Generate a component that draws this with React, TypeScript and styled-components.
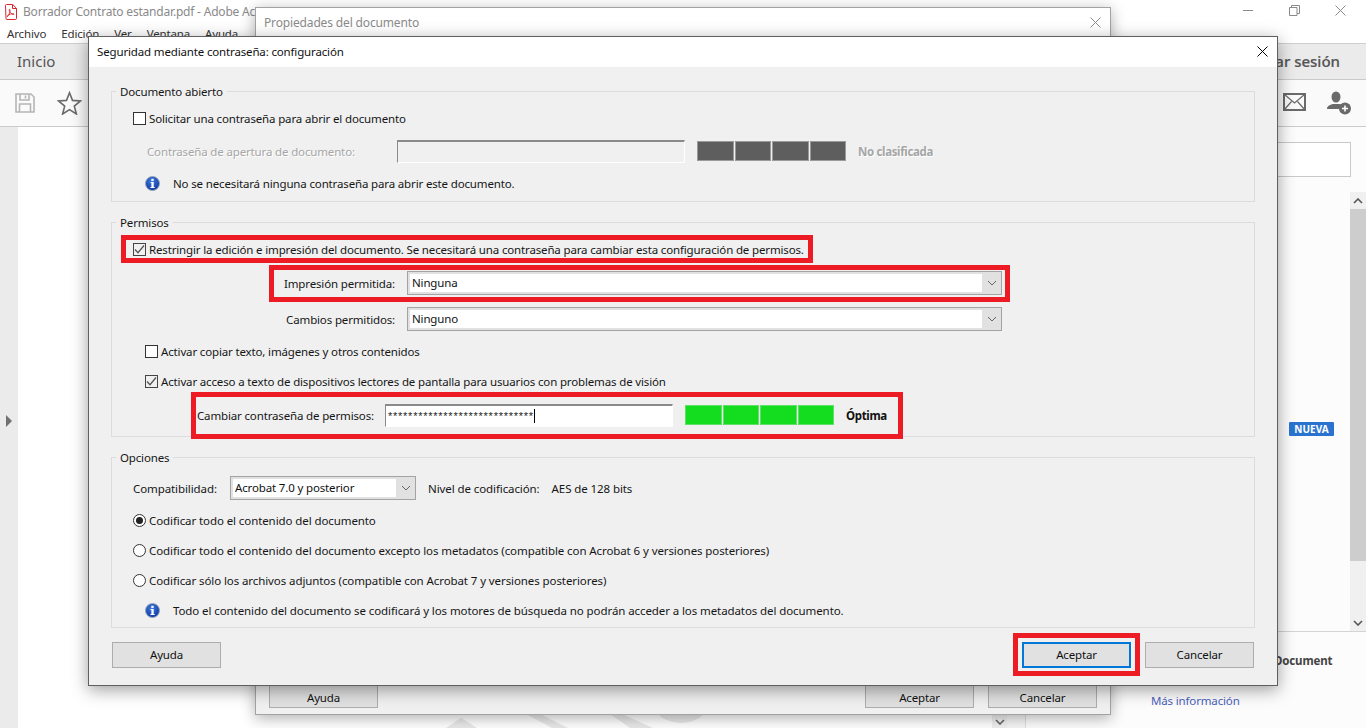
import React from "react";
import styled, { createGlobalStyle } from "styled-components";

const Global = createGlobalStyle`
  html, body { margin: 0; padding: 0; background: #fff; }
  * { box-sizing: border-box; }
  body { font-family: "Noto Sans", "Open Sans", sans-serif; font-size: 11.5px; letter-spacing: -0.15px; color: #161616; }
`;

const Page = styled.div`
  position: relative; width: 1366px; height: 728px; overflow: hidden;
  display: flex; flex-direction: column; background: #fff;
`;

/* ---------- background application ---------- */
const AppTitle = styled.div`
  height: 23px; display: flex; align-items: center; padding: 0 20px 0 4px; gap: 5px; color: #8a8a8a; font-size: 12px;
`;
const AppTitleText = styled.span`
  flex: 0 0 232px; overflow: hidden; white-space: nowrap; letter-spacing: -0.2px;
`;
const TitleSpacer = styled.div`flex: 1;`;
const WinControls = styled.div`display: flex; gap: 35px; margin-top: -3px;`;
const MenuBar = styled.div`
  height: 21px; display: flex; align-items: center; padding: 0 7px; gap: 15px; font-size: 11.5px; color: #333;
  border-bottom: 1px solid #cfcfcf;
`;
const TabBar = styled.div`
  height: 36px; background: #ebebeb; border-bottom: 1px solid #cacaca; display: flex; align-items: center;
  justify-content: space-between; padding: 0 26px 2px 17px; font-size: 15px; color: #555; letter-spacing: 0;
`;
const SignIn = styled.span`font-weight: 500; -webkit-text-stroke: 0.2px #555;`;
const Toolbar = styled.div`
  height: 47px; background: #fafafa; border-bottom: 1px solid #cbcbcb; display: flex; align-items: center;
  padding: 0 14px 0 15px; gap: 22px;
`;
const ToolSpacer = styled.div`flex: 1;`;
const ToolGapFix = styled.div`margin-right: -1px;`;
const Body = styled.div`flex: 1; display: flex; min-height: 0;`;
const Rail = styled.div`
  width: 18px; background: #ebebeb; display: flex; align-items: center; padding-left: 6px; padding-bottom: 14px;
`;
const RailArrow = styled.div`
  width: 0; height: 0; border-left: 6px solid #707070; border-top: 6px solid transparent; border-bottom: 6px solid transparent;
`;
const DocArea = styled.div`position: relative; flex: 0 0 974px; background: #fff;`;
const Watermark = styled.svg`position: absolute; left: 422px; bottom: 0;`;
const DocScroll = styled.div`
  width: 15px; background: #f0f0f0; display: flex; flex-direction: column; justify-content: flex-end; align-items: center; padding-bottom: 3px;
`;
const Splitter = styled.div`width: 19px; background: #f6f6f6; border-right: 1px solid #dedede;`;
const SidePane = styled.div`flex: 1; display: flex; flex-direction: column; background: #fcfcfc;`;
const SearchBox = styled.div`
  height: 35px; margin: 15px 15px 15px 0; background: #fff; border: 1px solid #c9c9c9;
`;
const ToolList = styled.div`
  flex: 0 0 440px; display: flex; border-bottom: 1px solid #d4d4d4;
`;
const ToolItems = styled.div`flex: 1; display: flex; justify-content: flex-end; padding: 230px 16px 0 0;`;
const Badge = styled.div`
  width: 45px; height: 14px; background: #2a74cf; color: #fff; border-radius: 1px; font-size: 10px; font-weight: 700;
  display: flex; align-items: center; justify-content: center; letter-spacing: 0;
`;
const Scrollbar = styled.div`
  width: 16px; background: #f0f0f0; display: flex; flex-direction: column; align-items: center;
`;
const ScrollArrow = styled.div`height: 17px; display: flex; align-items: center; justify-content: center;`;
const ScrollThumb = styled.div`width: 100%; height: 352px; background: #cdcdcd;`;
const ScrollTrack = styled.div`flex: 1;`;
const Promo = styled.div`flex: 1; display: flex; flex-direction: column; padding-left: 125px;`;
const PromoTitle = styled.div`margin: 21px 0 0 123px; font-weight: 700; font-size: 11.5px; color: #444;`;
const PromoLink = styled.a`margin-top: 25px; font-size: 11.5px; color: #4a62bd; text-decoration: none;`;

/* ---------- dialog windows ---------- */
const BackWindow = styled.div`
  position: absolute; left: 255px; top: 7px; width: 856px; height: 708px; background: #f0f0f0;
  border: 1px solid #a3a3a3; box-shadow: 0 3px 14px rgba(0,0,0,.32); display: flex; flex-direction: column;
`;
const BackTitle = styled.div`
  height: 30px; background: #fff; display: flex; align-items: center; justify-content: space-between;
  padding: 0 9px 2px 8px; color: #8a8a8a; font-size: 12px;
`;
const BackSpacer = styled.div`flex: 1;`;
const BackFooter = styled.div`display: flex; padding: 0 13px 6px; gap: 14px; font-size: 11.5px;`;
const FooterGap = styled.div`flex: 1;`;

const Dialog = styled.div`
  position: absolute; left: 88px; top: 36px; width: 1190px; background: #f0f0f0;
  border: 1px solid #5f5f5f; box-shadow: 0 4px 16px rgba(0,0,0,.38); display: flex; flex-direction: column;
`;
const DialogTitle = styled.div`
  height: 30px; background: #fff; display: flex; align-items: center; justify-content: space-between;
  padding: 0 9px 2px 8px; font-size: 11.5px; color: #111;
`;
const DialogBody = styled.div`display: flex; flex-direction: column; padding: 24px 22px 17px; gap: 20px;`;
const Group = styled.section<{ $pt: number; $pb: number; $ls?: number }>`
  position: relative; border: 1px solid #dcdcdc; padding: ${p => p.$pt}px 0 ${p => p.$pb}px;
  letter-spacing: ${p => p.$ls ?? -0.15}px;
`;
const Legend = styled.div`
  position: absolute; left: 4px; top: -9px; height: 17px; line-height: 17px; padding: 0 4px; background: #f0f0f0; font-size: 11.5px; letter-spacing: -0.15px;
`;
const Row = styled.div<{ $mt?: number; $h: number; $indent?: number }>`
  display: flex; align-items: center; height: ${p => p.$h}px; margin-top: ${p => p.$mt ?? 0}px; padding-left: ${p => p.$indent ?? 0}px;
  white-space: nowrap;
`;
const Box = styled.span<{ $gap?: number }>`
  flex: none; width: 13px; height: 13px; border: 1px solid #333; margin-right: ${p => p.$gap ?? 3}px;
  background: #fff; display: flex; align-items: center; justify-content: center;
`;
const CheckedBox = styled(Box)`background: #f0f0f0; border-color: #444;`;
const RadioDot = styled.span<{ $on?: boolean }>`
  flex: none; width: 13px; height: 13px; border-radius: 50%; border: 1px solid #333; margin-right: 3px;
  background: #fff; display: flex; align-items: center; justify-content: center;
  &::after { content: ""; width: 7px; height: 7px; border-radius: 50%; background: ${p => (p.$on ? "#222" : "transparent")}; }
`;
const Label = styled.label<{ $w: number; $right?: boolean; $muted?: boolean }>`
  flex: none; width: ${p => p.$w}px; text-align: ${p => (p.$right ? "right" : "left")};
  padding-right: ${p => (p.$right ? 12 : 0)}px;
  color: ${p => (p.$muted ? "#a6a6a6" : "inherit")};
  text-shadow: ${p => (p.$muted ? "1px 1px 0 #fff" : "none")};
`;
const InfoText = styled.span`margin-left: 13px;`;
const SunkenInput = styled.div<{ $w: number; $white?: boolean }>`
  flex: none; width: ${p => p.$w}px; height: 23px; border: 1px solid; border-color: #8a8a8a #fff #fff #8a8a8a;
  border-top-width: 2px; background: ${p => (p.$white ? "#fff" : "#f0f0f0")};
  display: flex; align-items: center; padding-left: 2px; font-family: "Liberation Sans", sans-serif; font-size: 11px; letter-spacing: 0;
`;
const Stars = styled.span`
  letter-spacing: 0.75px; line-height: 14px; height: 14px; border-right: 1px solid #000; margin-top: 1px; color: #222;
`;
const Meter = styled.div`display: flex; width: 149px; gap: 1px; margin-left: 12px;`;
const MeterCell = styled.div<{ $on?: boolean }>`
  flex: 1; height: 20px; background: ${p => (p.$on ? "#14dc1e" : "#5e5e5e")};
  border: 1px solid ${p => (p.$on ? "#5fe066" : "#9a9a9a")};
`;
const MeterText = styled.span<{ $muted?: boolean }>`
  margin-left: 12px; font-weight: 700; letter-spacing: -0.35px; color: ${p => (p.$muted ? "#a6a6a6" : "#111")};
  text-shadow: ${p => (p.$muted ? "1px 1px 0 #fff" : "none")};
`;
const Select = styled.div<{ $w: number }>`
  flex: none; width: ${p => p.$w}px; height: 24px; border: 1px solid #a3a3a3; background: #e1e1e1; display: flex; padding: 2px 0 2px 2px;
`;
const SelectValue = styled.div`flex: 1; background: #fff; padding-left: 2px; line-height: 18px; color: #111; letter-spacing: -0.15px;`;
const SelectArrow = styled.div`flex: 0 0 19px; display: flex; align-items: center; justify-content: center;`;
const PlainText = styled.span<{ $ml?: number }>`margin-left: ${p => p.$ml ?? 0}px;`;
const Footer = styled.div`display: flex; gap: 14px; padding: 0 1px; margin-top: -6px;`;
const Button = styled.button<{ $primary?: boolean }>`
  width: 109px; height: 26px; padding: 0 0 2px; background: #e1e1e1; font: inherit; letter-spacing: inherit; color: #111;
  border: ${p => (p.$primary ? "2px solid #0078d7" : "1px solid #adadad")};
`;
const BackButton = styled(Button)`padding: 4px 0 0;`;
const Mark = styled.div<{ $x: number; $y: number; $w: number; $h: number }>`
  position: absolute; left: ${p => p.$x}px; top: ${p => p.$y}px; width: ${p => p.$w}px; height: ${p => p.$h}px;
  border: 5px solid #ed1c24; pointer-events: none;
`;

/* ---------- icons ---------- */
const PdfIcon = () => (
  <svg width="14" height="16" viewBox="0 0 14 16" fill="none">
    <path d="M1.5 1.5C1.5 .9 1.9.5 2.5.5h6.2l3.8 3.8v10.2c0 .6-.4 1-1 1h-8.5c-.6 0-1-.4-1-1z" fill="#fff" stroke="#d8262c" />
    <path d="M8.5.8v3.7h3.7" stroke="#d8262c" />
    <path d="M3 12.6c1.5-.8 2.6-3 3-5.9.1-1-.1-1.6-.5-1.5-.5.1-.3 1.5.6 3 .9 1.4 2 2.3 3.2 2.4 1 0 1.1-.7.2-.9-1.600-.3-4 .4-6.100 2.200z" stroke="#d8262c" strokeWidth=".9" />
  </svg>
);
const MinIcon = () => <svg width="11" height="11" viewBox="0 0 11 11"><path d="M0 5.500h10" stroke="#8a8a8a" /></svg>;
const RestoreIcon = () => (
  <svg width="11" height="11" viewBox="0 0 11 11" fill="none" stroke="#8a8a8a">
    <path d="M.5 2.500h7.500v8H.500z" /><path d="M2.500 2.500V.5h8v8H8" />
  </svg>
);
const CloseIcon = ({ c = "#8a8a8a", s = 11 }: { c?: string; s?: number }) => (
  <svg width={s} height={s} viewBox="0 0 11 11"><path d="M.5.5l10 10M10.500.5l-10 10" stroke={c} fill="none" /></svg>
);
const SaveIcon = () => (
  <svg width="20" height="20" viewBox="0 0 20 20" fill="none" stroke="#b5b5b5" strokeWidth="1.600">
    <path d="M1 1h15l3 3v15H1z" /><path d="M5 1v6h9V1M10.500 2.500v3" /><path d="M4.500 19v-8h11v8" />
  </svg>
);
const StarIcon = () => (
  <svg width="25" height="24" viewBox="0 0 25 24" fill="none" stroke="#6a6a6a" strokeWidth="1.600" strokeLinejoin="miter">
    <path d="M12.500 1.800l3 7.600 8.100.5-6.300 5.200 2.100 7.900-6.900-4.400-6.900 4.400 2.100-7.900L1.400 9.900l8.100-.5z" />
  </svg>
);
const MailIcon = () => (
  <svg width="23" height="18" viewBox="0 0 23 18" fill="none" stroke="#6a6a6a">
    <rect x="1" y="1" width="21" height="16" strokeWidth="2" />
    <path d="M1.500 1.500l10 8.500 10-8.500M1.500 16.500l7-8M21.500 16.500l-7-8" strokeWidth="1.200" />
  </svg>
);
const UserPlusIcon = () => (
  <svg width="25" height="24" viewBox="0 0 25 24">
    <ellipse cx="9" cy="6" rx="4.500" ry="5.500" fill="#6a6a6a" />
    <path d="M0 18c0-3 3-4 5.500-5h7c2 .5 3 1 4 2-2 1-3 2-3.500 3z" fill="#6a6a6a" />
    <circle cx="18" cy="17.500" r="6" fill="#6a6a6a" />
    <path d="M18 14.500v6M15 17.500h6" stroke="#fff" strokeWidth="1.600" />
  </svg>
);
const Tick = () => (
  <svg width="11" height="11" viewBox="0 0 11 11"><path d="M1 5.500l3 3.200L10 1.500" fill="none" stroke="#555" strokeWidth="1.300" /></svg>
);
const Chevron = ({ up, c = "#666", w = 1 }: { up?: boolean; c?: string; w?: number }) => (
  <svg width="10" height="6" viewBox="0 0 10 6">
    <path d={up ? "M1 5l4-4 4 4" : "M1 1l4 4 4-4"} fill="none" stroke={c} strokeWidth={w} />
  </svg>
);
const Info = () => (
  <svg width="15" height="15" viewBox="0 0 15 15">
    <defs>
      <radialGradient id="ig" cx=".45" cy=".35" r=".7"><stop offset="0" stopColor="#3f7fe0" /><stop offset="1" stopColor="#0a2f9c" /></radialGradient>
    </defs>
    <circle cx="7.500" cy="7.500" r="7" fill="url(#ig)" stroke="#9aa6ba" />
    <rect x="6.300" y="2.800" width="2.400" height="2.100" fill="#fff" />
    <path d="M5.600 6h3.100v5h1v1.100H5.400V11h1V7.100h-.8z" fill="#fff" />
  </svg>
);

export default function App() {
  return (
    <Page>
      <Global />
      <AppTitle>
        <PdfIcon />
        <AppTitleText>Borrador Contrato estandar.pdf - Adobe Acrobat Reader DC</AppTitleText>
        <TitleSpacer />
        <WinControls><MinIcon /><RestoreIcon /><CloseIcon /></WinControls>
      </AppTitle>
      <MenuBar>
        <span>Archivo</span><span>Edición</span><span>Ver</span><span>Ventana</span><span>Ayuda</span>
      </MenuBar>
      <TabBar><span>Inicio</span><SignIn>Iniciar sesión</SignIn></TabBar>
      <Toolbar>
        <SaveIcon /><StarIcon /><ToolSpacer /><ToolGapFix><MailIcon /></ToolGapFix><UserPlusIcon />
      </Toolbar>
      <Body>
        <Rail><RailArrow /></Rail>
        <DocArea>
          <Watermark width="280" height="14" viewBox="440 714 280 14" fill="#e9e9e9">
            <path d="M446 728L459 719Q461 717 463 719L477 728Z" />
            <path d="M526 714H540L568 728H552Z" />
            <path d="M610 714H622L653 728H630Z" />
            <path d="M658 714H704Q695 723 680 723Q665 722 658 714Z" />
          </Watermark>
        </DocArea>
        <DocScroll><Chevron c="#666" w={1.6} /></DocScroll>
        <Splitter />
        <SidePane>
          <SearchBox />
          <ToolList>
            <ToolItems><Badge>NUEVA</Badge></ToolItems>
            <Scrollbar>
              <ScrollArrow><Chevron up c="#555" w={1.6} /></ScrollArrow>
              <ScrollThumb />
              <ScrollTrack />
              <ScrollArrow><Chevron c="#555" w={1.6} /></ScrollArrow>
            </Scrollbar>
          </ToolList>
          <Promo>
            <PromoTitle>Document</PromoTitle>
            <PromoLink>Más información</PromoLink>
          </Promo>
        </SidePane>
      </Body>

      <BackWindow>
        <BackTitle>Propiedades del documento<CloseIcon /></BackTitle>
        <BackSpacer />
        <BackFooter>
          <BackButton>Ayuda</BackButton><FooterGap /><BackButton>Aceptar</BackButton><BackButton>Cancelar</BackButton>
        </BackFooter>
      </BackWindow>

      <Dialog>
        <DialogTitle>Seguridad mediante contraseña: configuración<CloseIcon c="#000" s={11} /></DialogTitle>
        <DialogBody>
          <Group $pt={16} $pb={8}>
            <Legend>Documento abierto</Legend>
            <Row $h={20} $indent={21}><Box />Solicitar una contraseña para abrir el documento</Row>
            <Row $h={24} $mt={11} $indent={35}>
              <Label $w={250} $muted>Contraseña de apertura de documento:</Label>
              <SunkenInput $w={288} />
              <Meter><MeterCell /><MeterCell /><MeterCell /><MeterCell /></Meter>
              <MeterText $muted>No clasificada</MeterText>
            </Row>
            <Row $h={20} $mt={10} $indent={33}><Info /><InfoText>No se necesitará ninguna contraseña para abrir este documento.</InfoText></Row>
          </Group>

          <Group $pt={14} $pb={9}>
            <Legend>Permisos</Legend>
            <Row $h={24} $indent={21}><CheckedBox><Tick /></CheckedBox>Restringir la edición e impresión del documento. Se necesitará una contraseña para cambiar esta configuración de permisos.</Row>
            <Row $h={24} $mt={10}>
              <Label $w={295} $right>Impresión permitida:</Label>
              <Select $w={595}><SelectValue>Ninguna</SelectValue><SelectArrow><Chevron /></SelectArrow></Select>
            </Row>
            <Row $h={24} $mt={12}>
              <Label $w={295} $right>Cambios permitidos:</Label>
              <Select $w={595}><SelectValue>Ninguno</SelectValue><SelectArrow><Chevron /></SelectArrow></Select>
            </Row>
            <Row $h={20} $mt={10} $indent={33}><Box />Activar copiar texto, imágenes y otros contenidos</Row>
            <Row $h={20} $mt={10} $indent={33}><CheckedBox><Tick /></CheckedBox>Activar acceso a texto de dispositivos lectores de pantalla para usuarios con problemas de visión</Row>
            <Row $h={24} $mt={12} $indent={85}>
              <Label $w={188}>Cambiar contraseña de permisos:</Label>
              <SunkenInput $w={288} $white><Stars>*****************************</Stars></SunkenInput>
              <Meter><MeterCell $on /><MeterCell $on /><MeterCell $on /><MeterCell $on /></Meter>
              <MeterText>Óptima</MeterText>
            </Row>
          </Group>

          <Group $pt={18} $pb={7} $ls={-0.09}>
            <Legend>Opciones</Legend>
            <Row $h={24} $indent={21}>
              <Label $w={97}>Compatibilidad:</Label>
              <Select $w={186}><SelectValue>Acrobat 7.0 y posterior</SelectValue><SelectArrow><Chevron /></SelectArrow></Select>
              <PlainText $ml={12}>Nivel de codificación:</PlainText>
              <PlainText $ml={12}>AES de 128 bits</PlainText>
            </Row>
            <Row $h={20} $mt={10} $indent={21}><RadioDot $on />Codificar todo el contenido del documento</Row>
            <Row $h={20} $mt={10} $indent={21}><RadioDot />Codificar todo el contenido del documento excepto los metadatos (compatible con Acrobat 6 y versiones posteriores)</Row>
            <Row $h={20} $mt={10} $indent={21}><RadioDot />Codificar sólo los archivos adjuntos (compatible con Acrobat 7 y versiones posteriores)</Row>
            <Row $h={20} $mt={10} $indent={33}><Info /><InfoText>Todo el contenido del documento se codificará y los motores de búsqueda no podrán acceder a los metadatos del documento.</InfoText></Row>
          </Group>

          <Footer>
            <Button>Ayuda</Button><FooterGap /><Button $primary>Aceptar</Button><Button>Cancelar</Button>
          </Footer>
        </DialogBody>
      </Dialog>

      <Mark $x={121} $y={235} $w={692} $h={28} />
      <Mark $x={269} $y={265} $w={741} $h={37} />
      <Mark $x={191} $y={392} $w={712} $h={47} />
      <Mark $x={1013} $y={633} $w={127} $h={43} />
    </Page>
  );
}
